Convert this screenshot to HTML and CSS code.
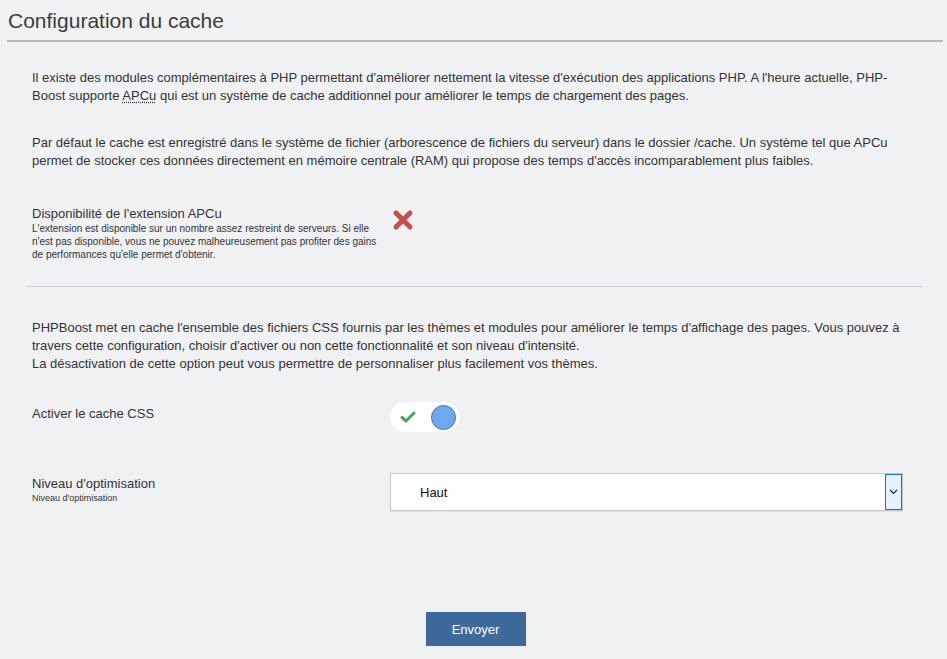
FILE: index.html
```html
<!DOCTYPE html>
<html lang="fr">
<head>
<meta charset="utf-8">
<title>Configuration du cache</title>
<link rel="stylesheet" href="styles.css">
</head>
<body>
<div class="page">
  <h1 class="page-title">Configuration du cache</h1>
  <form class="config">
    <section class="block">
      <p class="desc">Il existe des modules complémentaires à PHP permettant d'améliorer nettement la vitesse d'exécution des applications PHP. A l'heure actuelle, PHP-Boost supporte <abbr>APCu</abbr> qui est un système de cache additionnel pour améliorer le temps de chargement des pages.</p>
      <p class="desc">Par défaut le cache est enregistré dans le système de fichier (arborescence de fichiers du serveur) dans le dossier /cache. Un système tel que APCu permet de stocker ces données directement en mémoire centrale (RAM) qui propose des temps d'accès incomparablement plus faibles.</p>
      <div class="row row-apcu">
        <div class="label">
          <span class="label-main">Disponibilité de l'extension APCu</span>
          <span class="label-sub">L'extension est disponible sur un nombre assez restreint de serveurs. Si elle n'est pas disponible, vous ne pouvez malheureusement pas profiter des gains de performances qu'elle permet d'obtenir.</span>
        </div>
        <div class="field">
          <svg class="cross" width="22" height="22" viewBox="0 0 22 22"><path d="M4 4 L18 18 M18 4 L4 18" stroke="#c64e4b" stroke-width="5" stroke-linecap="round"/></svg>
        </div>
      </div>
    </section>
    <hr class="sep">
    <section class="block">
      <p class="desc">PHPBoost met en cache l'ensemble des fichiers CSS fournis par les thèmes et modules pour améliorer le temps d'affichage des pages. Vous pouvez à travers cette configuration, choisir d'activer ou non cette fonctionnalité et son niveau d'intensité.<br>La désactivation de cette option peut vous permettre de personnaliser plus facilement vos thèmes.</p>
      <div class="row row-toggle">
        <div class="label"><span class="label-main">Activer le cache CSS</span></div>
        <div class="field">
          <span class="toggle">
            <svg class="check" width="16" height="12" viewBox="0 0 16 12"><path d="M2 6.5 L6 10 L14 2" fill="none" stroke="#4ea354" stroke-width="3" stroke-linecap="round" stroke-linejoin="round"/></svg>
            <span class="knob"></span>
          </span>
        </div>
      </div>
      <div class="row row-select">
        <div class="label">
          <span class="label-main">Niveau d'optimisation</span>
          <span class="label-sub">Niveau d'optimisation</span>
        </div>
        <div class="field">
          <div class="select">
            <span class="select-value">Haut</span>
            <span class="select-arrow"><svg width="9" height="6" viewBox="0 0 9 6"><path d="M1 1 L4.5 4.5 L8 1" fill="none" stroke="#222" stroke-width="1.2"/></svg></span>
          </div>
        </div>
      </div>
    </section>
    <div class="actions">
      <button type="button" class="submit">Envoyer</button>
    </div>
  </form>
</div>
</body>
</html>
```
FILE: styles.css
```css
html, body {
  margin: 0;
  padding: 0;
  background: #f0f1f3;
}
body {
  font-family: "Liberation Sans", Arial, sans-serif;
  color: #333;
  font-size: 13px;
}
.page {
  padding: 0 4px 0 7px;
}
.page-title {
  margin: 0;
  padding: 8px 0 7px 1px;
  font-size: 21px;
  font-weight: normal;
  color: #3c3c3c;
  line-height: 25px;
  border-bottom: 2px solid #b8b9bc;
}
.config {
  padding: 0 21px 0 20px;
}
.block {
  padding: 0 5px;
}
.desc {
  margin: 0;
  line-height: 18px;
  padding-right: 8px;
}
.block:first-child .desc:first-child {
  margin-top: 27px;
}
.desc + .desc {
  margin-top: 29px;
}
abbr {
  text-decoration: underline dotted #333;
  text-underline-offset: 2px;
}
.row {
  display: flex;
  align-items: flex-start;
}
.label {
  width: 358px;
  display: flex;
  flex-direction: column;
}
.label-main {
  font-size: 13px;
  line-height: 16px;
}
.label-sub {
  font-size: 10px;
  line-height: 13px;
  padding-right: 10px;
}
.field {
  flex: 1;
}
.row-apcu {
  margin-top: 36px;
}
.cross {
  display: block;
  margin: 3px 0 0 2px;
}
.sep {
  margin: 25px 0 0 0;
  border: 0;
  border-top: 1px solid #c5d0dc;
}
.block + .sep + .block .desc {
  margin-top: 32px;
}
.row-toggle {
  margin-top: 29px;
  align-items: center;
}
.row-toggle .label {
  padding-bottom: 7px;
}
.toggle {
  width: 70px;
  height: 30px;
  border-radius: 15px;
  background: #fff;
  display: flex;
  align-items: center;
  box-shadow: 0 0 1px rgba(0,0,0,0.08);
}
.check {
  margin-left: 10px;
}
.knob {
  width: 23px;
  height: 23px;
  border-radius: 50%;
  background: #6fa9ec;
  border: 1px solid #3f72b3;
  margin-left: 15px;
}
.row-select {
  margin-top: 41px;
}
.row-select .label {
  padding-top: 3px;
}
.row-select .label-sub {
  font-size: 9px;
  line-height: 12px;
}
.select {
  width: 511px;
  height: 36px;
  background: #fff;
  border: 1px solid #c6c6c6;
  display: flex;
  align-items: stretch;
  box-shadow: 0 1px 1px rgba(0,0,0,0.06);
}
.select-value {
  flex: 1;
  display: flex;
  align-items: center;
  padding-left: 29px;
  color: #111;
  font-size: 13px;
}
.select-arrow {
  width: 15px;
  background: #e5f1fb;
  border: 1px solid #0a78d6;
  display: flex;
  align-items: center;
  justify-content: center;
}
.actions {
  display: flex;
  justify-content: center;
  margin-top: 101px;
  padding-left: 2px;
}
.submit {
  width: 100px;
  height: 34px;
  background: #3e6a9b;
  color: #fff;
  border: 0;
  font-family: "Liberation Sans", Arial, sans-serif;
  font-size: 13px;
  padding: 0;
}
```
